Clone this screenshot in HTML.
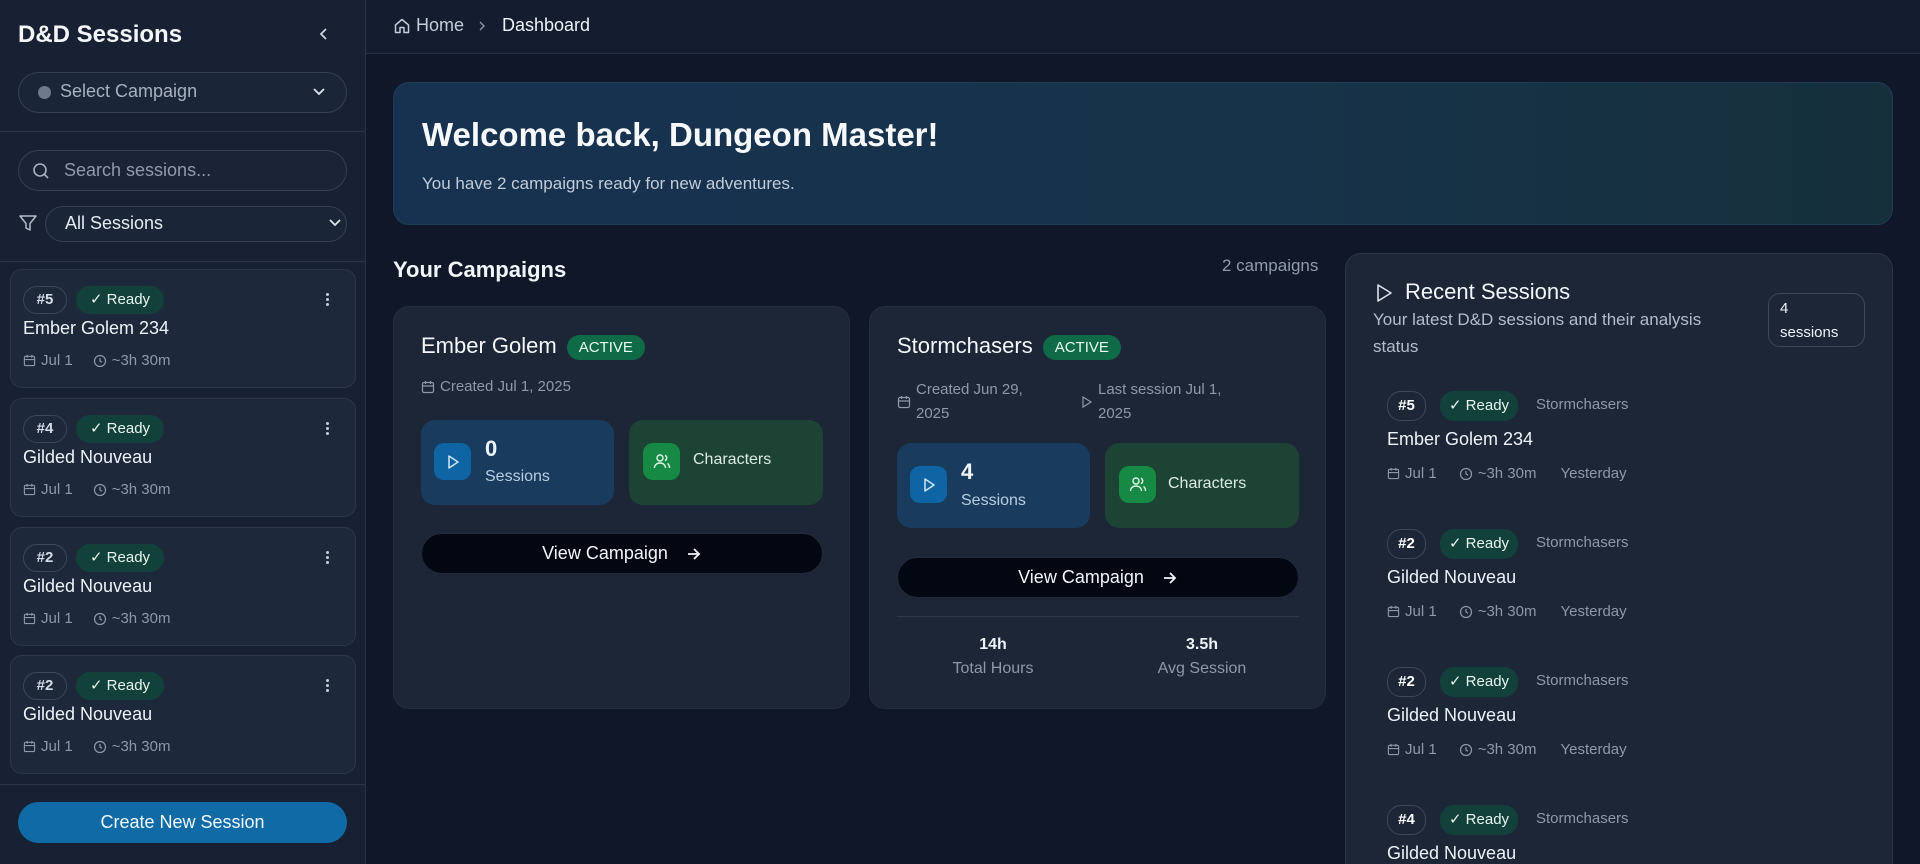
<!DOCTYPE html>
<html style="width:1920px;height:864px;overflow:hidden"><head><meta charset="utf-8"><style>
*{box-sizing:border-box;margin:0;padding:0}
body{width:1920px;height:864px;overflow:hidden;background:#0f1729;font-family:"Liberation Sans",sans-serif;color:#e8edf4;position:relative}
.abs{position:absolute}
.side{left:0;top:0;width:366px;height:864px;background:#172133;border-right:1px solid #2a3548}
.pill{border:1px solid #334055;border-radius:22px;background:#1a2538}
.hr{height:1px;background:#2a3548;position:absolute;left:0;width:365px}
.scard{left:10px;width:346px;height:119px;background:#1d283a;border:1px solid #2b374a;border-radius:12px}
.num{position:absolute;border:1px solid #3a475c;border-radius:14px;font-size:15px;color:#d5dbe4;text-align:center;font-weight:bold}
.ready{position:absolute;background:#12403a;border-radius:14px;font-size:15px;color:#e8f5ef;text-align:center}
.meta{position:absolute;font-size:15px;color:#8d98a8;display:flex;align-items:center;gap:5px}
svg{display:inline-block}
.card{background:#1c2637;border-radius:16px;border:1px solid #222d3f}
.stat{position:absolute;border-radius:14px;height:85px}
.ico{position:absolute;width:37px;height:37px;border-radius:10px;display:flex;align-items:center;justify-content:center}
.btn{position:absolute;background:#030712;border:1px solid #1f2a3a;border-radius:22px;height:41px;font-size:18px;color:#f2f5f9;display:flex;align-items:center;justify-content:center;gap:18px}
.act{display:inline-block;background:#0f6b47;color:#e9fbf2;font-size:15px;border-radius:14px;padding:4px 12px;margin-left:10px;vertical-align:middle}
</style></head><body>
<div class="abs side">
  <div class="abs" style="left:18px;top:21px;font-size:24px;font-weight:bold;color:#f4f6fa">D&amp;D Sessions</div>
  <svg class="abs" style="left:318px;top:27px" width="12" height="14" viewBox="0 0 12 14"><path d="M8 2 3 7l5 5" stroke="#cdd4de" stroke-width="1.8" fill="none"/></svg>
  <div class="abs pill" style="left:18px;top:72px;width:329px;height:41px"></div>
  <div class="abs" style="left:38px;top:86px;width:13px;height:13px;border-radius:50%;background:#6e7a8c"></div>
  <div class="abs" style="left:60px;top:81px;font-size:18px;color:#a6b0bf">Select Campaign</div>
  <svg class="abs" style="left:312px;top:87px" width="14" height="10"><path d="M2 2l5 5 5-5" stroke="#dfe5ec" stroke-width="1.8" fill="none"/></svg>
  <div class="hr" style="top:131px"></div>
  <div class="abs pill" style="left:18px;top:150px;width:329px;height:41px;background:#1a2436"></div>
  <svg class="abs" style="left:32px;top:162px" width="18" height="18" viewBox="0 0 18 18"><circle cx="8" cy="8" r="6" stroke="#a6b0bf" stroke-width="1.6" fill="none"/><path d="M12.5 12.5 16 16" stroke="#a6b0bf" stroke-width="1.6"/></svg>
  <div class="abs" style="left:64px;top:160px;font-size:18px;color:#8f9aab">Search sessions...</div>
  <svg class="abs" style="left:18px;top:213px" width="20" height="20" viewBox="0 0 20 20"><path d="M2 3h16l-6 7.5V17l-4-2v-4.5z" stroke="#b3bcc8" stroke-width="1.5" fill="none" stroke-linejoin="round"/></svg>
  <div class="abs pill" style="left:45px;top:206px;width:302px;height:36px"></div>
  <div class="abs" style="left:65px;top:213px;font-size:18px;color:#e6ebf2">All Sessions</div>
  <svg class="abs" style="left:328px;top:218px" width="14" height="10"><path d="M2 2l5 5 5-5" stroke="#dfe5ec" stroke-width="1.8" fill="none"/></svg>
  <div class="hr" style="top:261px"></div>

  <div class="abs scard" style="top:269px"></div>
  <div class="abs scard" style="top:398px"></div>
  <div class="abs scard" style="top:527px"></div>
  <div class="abs scard" style="top:655px"></div>

  <div class="hr" style="top:784px"></div>
  <div class="abs" style="left:18px;top:802px;width:329px;height:41px;border-radius:22px;background:#0f6aa6;font-size:18px;color:#f3f8fc;text-align:center;line-height:41px">Create New Session</div>
</div>

<div id="sc"></div>

<div class="abs" style="left:366px;top:0;width:1554px;height:54px;background:#131d2f;border-bottom:1px solid #263246"></div>
<svg class="abs" style="left:393px;top:17px" width="18" height="18" viewBox="0 0 18 18"><path d="M2.5 8 9 2.5 15.5 8v7.5h-4.5v-5h-4v5H2.5z" stroke="#c4ccd7" stroke-width="1.5" fill="none" stroke-linejoin="round"/></svg>
<div class="abs" style="left:416px;top:15px;font-size:18px;color:#c4ccd7">Home</div>
<svg class="abs" style="left:477px;top:20px" width="10" height="12"><path d="M3 2l4 4-4 4" stroke="#8a95a5" stroke-width="1.4" fill="none"/></svg>
<div class="abs" style="left:502px;top:15px;font-size:18px;color:#eef2f7">Dashboard</div>

<div class="abs" style="left:393px;top:82px;width:1500px;height:143px;border-radius:16px;border:1px solid #1f3b55;background:linear-gradient(90deg,#163250,#173349 60%,#152f3b)"></div>
<div class="abs" style="left:422px;top:116px;font-size:33px;font-weight:bold;color:#f6f8fb">Welcome back, Dungeon Master!</div>
<div class="abs" style="left:422px;top:174px;font-size:17px;color:#c2ccd8">You have 2 campaigns ready for new adventures.</div>

<div class="abs" style="left:393px;top:257px;font-size:22px;font-weight:bold;color:#f2f5f9">Your Campaigns</div>
<div class="abs" style="left:1222px;top:256px;font-size:17px;color:#8f9aab">2 campaigns</div>

<div class="abs card" style="left:393px;top:306px;width:457px;height:403px"></div>
<div class="abs" style="left:421px;top:333px;font-size:22px;color:#f4f6fa">Ember Golem<span class="act">ACTIVE</span></div>
<div class="abs meta" style="left:421px;top:378px"><svg width="14" height="14" viewBox="0 0 14 14"><rect x="1.5" y="2.5" width="11" height="10" rx="1.5" stroke="#8d98a8" fill="none" stroke-width="1.2"/><path d="M1.5 6h11M4.5 1v3M9.5 1v3" stroke="#8d98a8" stroke-width="1.2"/></svg>Created Jul 1, 2025</div>
<div class="stat" style="left:421px;top:420px;width:193px;background:#183b5e"></div>
<div class="ico" style="left:434px;top:443px;background:#0f65a3"><svg width="18" height="18"><path d="M5 3l9 6-9 6z" stroke="#cfe6fa" stroke-width="1.5" fill="none" stroke-linejoin="round"/></svg></div>
<div class="abs" style="left:485px;top:436px;font-size:22px;font-weight:bold;color:#eef4fa">0</div>
<div class="abs" style="left:485px;top:468px;font-size:16px;color:#b9cde0">Sessions</div>
<div class="stat" style="left:629px;top:420px;width:194px;background:#1c4334"></div>
<div class="ico" style="left:643px;top:443px;background:#168a45"><svg width="20" height="20" viewBox="0 0 20 20"><circle cx="8" cy="6" r="3" stroke="#e0f6e8" stroke-width="1.4" fill="none"/><path d="M2.5 16c0-3 2.5-5 5.5-5s5.5 2 5.5 5M13 3.3a3 3 0 0 1 0 5.4M15.5 11.5c1.3.8 2 2.5 2 4.5" stroke="#e0f6e8" stroke-width="1.4" fill="none"/></svg></div>
<div class="abs" style="left:693px;top:451px;font-size:16px;color:#dceae2">Characters</div>
<div class="btn" style="left:421px;top:533px;width:402px">View Campaign <svg width="16" height="14" viewBox="0 0 16 14"><path d="M2 7h11M8 2l5 5-5 5" stroke="#f2f5f9" stroke-width="1.8" fill="none"/></svg></div>

<div class="abs card" style="left:869px;top:306px;width:457px;height:403px"></div>
<div class="abs" style="left:897px;top:333px;font-size:22px;color:#f4f6fa">Stormchasers<span class="act">ACTIVE</span></div>
<div class="abs meta" style="left:897px;top:378px;align-items:center;line-height:24px"><svg width="14" height="14" viewBox="0 0 14 14"><rect x="1.5" y="2.5" width="11" height="10" rx="1.5" stroke="#8d98a8" fill="none" stroke-width="1.2"/><path d="M1.5 6h11M4.5 1v3M9.5 1v3" stroke="#8d98a8" stroke-width="1.2"/></svg><span>Created Jun 29,<br>2025</span></div>
<div class="abs meta" style="left:1081px;top:378px;line-height:24px"><svg width="12" height="14"><path d="M2 2l8 5-8 5z" stroke="#8d98a8" stroke-width="1.2" fill="none"/></svg><span>Last session Jul 1,<br>2025</span></div>
<div class="stat" style="left:897px;top:443px;width:193px;background:#183b5e"></div>
<div class="ico" style="left:910px;top:466px;background:#0f65a3"><svg width="18" height="18"><path d="M5 3l9 6-9 6z" stroke="#cfe6fa" stroke-width="1.5" fill="none" stroke-linejoin="round"/></svg></div>
<div class="abs" style="left:961px;top:459px;font-size:22px;font-weight:bold;color:#eef4fa">4</div>
<div class="abs" style="left:961px;top:492px;font-size:16px;color:#b9cde0">Sessions</div>
<div class="stat" style="left:1105px;top:443px;width:194px;background:#1c4334"></div>
<div class="ico" style="left:1119px;top:466px;background:#168a45"><svg width="20" height="20" viewBox="0 0 20 20"><circle cx="8" cy="6" r="3" stroke="#e0f6e8" stroke-width="1.4" fill="none"/><path d="M2.5 16c0-3 2.5-5 5.5-5s5.5 2 5.5 5M13 3.3a3 3 0 0 1 0 5.4M15.5 11.5c1.3.8 2 2.5 2 4.5" stroke="#e0f6e8" stroke-width="1.4" fill="none"/></svg></div>
<div class="abs" style="left:1168px;top:475px;font-size:16px;color:#dceae2">Characters</div>
<div class="btn" style="left:897px;top:557px;width:402px">View Campaign <svg width="16" height="14" viewBox="0 0 16 14"><path d="M2 7h11M8 2l5 5-5 5" stroke="#f2f5f9" stroke-width="1.8" fill="none"/></svg></div>
<div class="abs" style="left:897px;top:616px;width:402px;height:1px;background:#2c384b"></div>
<div class="abs" style="left:948px;top:636px;width:90px;text-align:center;font-size:16px;font-weight:bold;color:#eef2f7">14h</div>
<div class="abs" style="left:938px;top:660px;width:110px;text-align:center;font-size:16px;color:#8d98a8">Total Hours</div>
<div class="abs" style="left:1157px;top:636px;width:90px;text-align:center;font-size:16px;font-weight:bold;color:#eef2f7">3.5h</div>
<div class="abs" style="left:1142px;top:660px;width:120px;text-align:center;font-size:16px;color:#8d98a8">Avg Session</div>

<div class="abs" style="left:1345px;top:253px;width:548px;height:611px;overflow:hidden">
<div class="abs card" style="left:0;top:0;width:548px;height:700px;background:#1c2637;border:1px solid #2a3548"></div>
</div>
<svg class="abs" style="left:1375px;top:283px" width="18" height="20"><path d="M3 2l13 8-13 8z" stroke="#dde3eb" stroke-width="1.6" fill="none" stroke-linejoin="round"/></svg>
<div class="abs" style="left:1405px;top:279px;font-size:22px;color:#f3f6fa">Recent Sessions</div>
<div class="abs" style="left:1373px;top:306px;width:370px;font-size:17px;line-height:27px;color:#b3bdca">Your latest D&amp;D sessions and their analysis status</div>
<div class="abs" style="left:1768px;top:293px;width:97px;height:54px;border:1px solid #3a475c;border-radius:12px;font-size:15px;line-height:24px;padding:3px 11px;color:#eef2f7">4<br>sessions</div>
<div id="rs"></div>

<script>
var cal='<svg width="13" height="13" viewBox="0 0 14 14"><rect x="1.5" y="2.5" width="11" height="10" rx="1.5" stroke="#8d98a8" fill="none" stroke-width="1.2"/><path d="M1.5 6h11M4.5 1v3M9.5 1v3" stroke="#8d98a8" stroke-width="1.2"/></svg>';
var clk='<svg width="14" height="14" viewBox="0 0 14 14"><circle cx="7" cy="7" r="5.5" stroke="#8d98a8" fill="none" stroke-width="1.2"/><path d="M7 4v3l2 1.2" stroke="#8d98a8" stroke-width="1.2" fill="none"/></svg>';
var sc=[["#5","Ember Golem 234",269],["#4","Gilded Nouveau",398],["#2","Gilded Nouveau",527],["#2","Gilded Nouveau",655]];
var h='';
sc.forEach(function(s){var t=s[2];
h+='<div class="num" style="left:23px;top:'+(t+17)+'px;width:44px;height:28px;line-height:26px">'+s[0]+'</div>';
h+='<div class="ready" style="left:76px;top:'+(t+17)+'px;width:88px;height:28px;line-height:28px">✓ Ready</div>';
h+='<div class="abs" style="left:326px;top:'+(t+24)+'px;width:4px;font-size:0"><div style="width:3px;height:3px;background:#c4ccd7;border-radius:50%;margin-bottom:2px"></div><div style="width:3px;height:3px;background:#c4ccd7;border-radius:50%;margin-bottom:2px"></div><div style="width:3px;height:3px;background:#c4ccd7;border-radius:50%"></div></div>';
h+='<div class="abs" style="left:23px;top:'+(t+49)+'px;font-size:18px;color:#eef2f7">'+s[1]+'</div>';
h+='<div class="meta" style="left:23px;top:'+(t+83)+'px">'+cal+'Jul 1<span style="width:10px"></span>'+clk+'~3h 30m</div>';
});
document.getElementById('sc').innerHTML=h;
var rs=[["#5","Ember Golem 234",405],["#2","Gilded Nouveau",543],["#2","Gilded Nouveau",681],["#4","Gilded Nouveau",819]];
h='';
rs.forEach(function(s){var t=s[2];
h+='<div class="num" style="left:1387px;top:'+(t-14)+'px;width:39px;height:30px;line-height:28px;color:#fff">'+s[0]+'</div>';
h+='<div class="ready" style="left:1440px;top:'+(t-14)+'px;width:78px;height:30px;line-height:30px">✓ Ready</div>';
h+='<div class="abs" style="left:1536px;top:'+(t-9)+'px;font-size:15px;color:#8d98a8">Stormchasers</div>';
h+='<div class="abs" style="left:1387px;top:'+(t+24)+'px;font-size:18px;color:#eef2f7">'+s[1]+'</div>';
if(t+60<850)h+='<div class="meta" style="left:1387px;top:'+(t+60)+'px">'+cal+'Jul 1<span style="width:12px"></span>'+clk+'~3h 30m<span style="width:14px"></span>Yesterday</div>';
});
document.getElementById('rs').innerHTML=h;
</script>
</body></html>
